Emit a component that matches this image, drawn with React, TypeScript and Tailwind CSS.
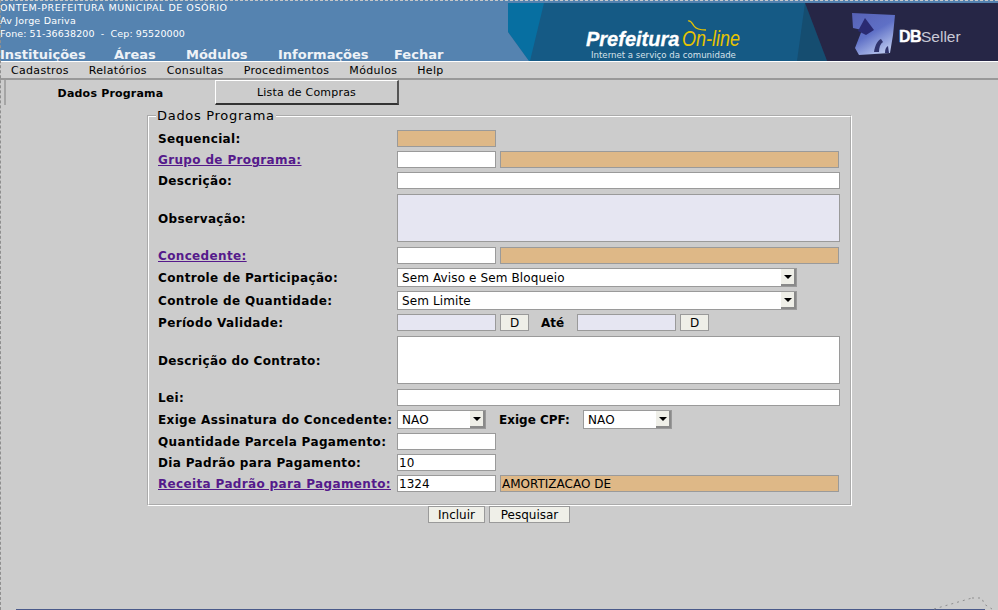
import React from 'react';

const font = "font-['DejaVu_Sans',sans-serif]";
const inputBase = "h-[17px] border border-[#9a9a9a] px-[1px] text-[12px] leading-[17px] text-black overflow-hidden whitespace-nowrap";
const tan = "bg-[#deb887]";
const lilac = "bg-[#e6e6f2]";

function Label({ children, link }: { children: React.ReactNode; link?: boolean }) {
    return (
        <div className={`h-[17px] w-[239px] shrink-0 text-[12px] font-bold leading-[19px] tracking-[0.35px] whitespace-nowrap ${link ? 'text-[#551a8b] underline' : 'text-black'}`}>
            {children}
        </div>
    );
}

function Box({ w, color = 'bg-white', children }: { w: string; color?: string; children?: React.ReactNode }) {
    return <div className={`${inputBase} ${w} ${color}`}>{children}</div>;
}

function Select({ w, value }: { w: string; value: string }) {
    return (
        <div className={`flex h-[19px] ${w} items-stretch border border-[#9a9a9a] bg-white`}>
            <div className="flex-1 pl-[4px] text-[12px] leading-[18px] tracking-[0.12px] text-black">{value}</div>
            <div className="flex w-[15px] items-center justify-center border-r-2 border-b-2 border-[#8a8a8a] bg-[#efefe8]">
                <div className="h-0 w-0 border-x-[4px] border-t-[4px] border-x-transparent border-t-black" />
            </div>
        </div>
    );
}

function Btn({ w, children }: { w: string; children: React.ReactNode }) {
    return (
        <div className={`h-[17px] ${w} border border-[#9a9a9a] bg-[#efefe8] text-center text-[12px] leading-[17px] text-black`}>
            {children}
        </div>
    );
}

function Row({ children, mb = 'mb-[4px]' }: { children: React.ReactNode; mb?: string }) {
    return <div className={`flex items-center ${mb}`}>{children}</div>;
}

function Banner() {
    return (
        <svg width="490" height="61" viewBox="0 0 490 61" className="shrink-0">
            <defs>
                <linearGradient id="dbLogo" x1="0" y1="0" x2="0.6" y2="1">
                    <stop offset="0" stopColor="#5661b4" />
                    <stop offset="0.55" stopColor="#5f70c6" />
                    <stop offset="1" stopColor="#b4c2ec" />
                </linearGradient>
            </defs>
            <rect width="490" height="61" fill="#155a85" />
            <rect width="490" height="3" fill="#5583b0" />
            <polygon points="0,3 36,3 22,61 21,61 0,32" fill="#076fa1" />
            <polygon points="0,32 21,61 0,61" fill="#5583b0" />
            <polygon points="297,3 289,61 319,61" fill="#154d70" />
            <polygon points="297,3 490,3 490,61 319,61" fill="#262646" />
            <text x="78" y="46" fontFamily="'Liberation Sans',sans-serif" fontWeight="700" fontStyle="italic" fontSize="20" fill="#fff" stroke="#fff" strokeWidth="0.3">Prefeitura</text>
            <text x="174" y="46" fontFamily="'Liberation Sans',sans-serif" fontStyle="italic" fontSize="22" fill="#e8c400" textLength="58" lengthAdjust="spacingAndGlyphs">On-line</text>
            <path d="M180 21c3-1 4 2 6 5 2 3 6 4 12 4" fill="none" stroke="#e8c400" strokeWidth="1.3" />
            <text x="83" y="58" fontFamily="'DejaVu Sans',sans-serif" fontSize="8.6" fill="#d5e2ea">Internet a serviço da comunidade</text>
            <polygon points="344,13 387,15 385,35 382,53 351,55 347,48 354,30 345,28" fill="url(#dbLogo)" />
            <polygon points="350,31 357,18 366,30 358,35" fill="#2a2a72" />
            <path d="M366 52c1-7 4-12 7-13l2 3c-3 2-4 6-4 10zM377 53c0-4 1-6 3-7l1 7z" fill="#30346c" />
            <text x="391" y="42" fontFamily="'Liberation Sans',sans-serif" fontWeight="700" fontSize="16" fill="#fff" letterSpacing="-0.6" stroke="#fff" strokeWidth="0.4">DB</text>
            <text x="413" y="42" fontFamily="'Liberation Sans',sans-serif" fontSize="15.5" fill="#c9c9d6">Seller</text>
        </svg>
    );
}

export default function App() {
    return (
        <div className={`relative flex h-[610px] w-[998px] flex-col overflow-hidden bg-[#cccccc] ${font}`}>
            {/* cabecalho */}
            <div className="flex h-[61px] shrink-0 justify-between overflow-hidden bg-[#5583b0]">
                <div className="flex flex-col text-white">
                    <div className="pt-[1px] text-[9.5px] leading-[13px] whitespace-nowrap">
                        <div className="tracking-[0.55px]">ONTEM-PREFEITURA MUNICIPAL DE OSÓRIO</div>
                        <div className="tracking-[0.2px]">Av Jorge Dariva</div>
                        <div className="tracking-[0.1px] whitespace-pre">Fone: 51-36638200  -  Cep: 95520000</div>
                    </div>
                    <div className="mt-[6px] flex text-[13px] font-bold leading-[18px] text-[#eef2f7]">
                        <span className="w-[114px]">Instituições</span>
                        <span className="w-[72px]">Áreas</span>
                        <span className="w-[92px]">Módulos</span>
                        <span className="w-[116px]">Informações</span>
                        <span>Fechar</span>
                    </div>
                </div>
                <Banner />
            </div>

            {/* menu */}
            <div className="flex h-[19px] shrink-0 gap-[20px] border-t border-b-2 border-t-white border-b-[#999999] bg-[#cfcfcf] pt-[1px] pl-[11px] text-[11px] leading-[16px] tracking-[0.32px] text-black">
                <span>Cadastros</span>
                <span>Relatórios</span>
                <span>Consultas</span>
                <span>Procedimentos</span>
                <span>Módulos</span>
                <span>Help</span>
            </div>

            {/* abas */}
            <div className="flex h-[25px] shrink-0 pl-[4px]">
                <div className="w-[211px] border-l-2 border-l-[#a5a5a5] pt-[6px] text-center text-[11px] font-bold leading-[16px] tracking-[0.2px] text-black">
                    Dados Programa
                </div>
                <div className="h-[25px] w-[184px] border border-t-white border-l-white border-r-2 border-b-2 border-r-[#555555] border-b-[#333333] text-center text-[11px] leading-[24px] tracking-[0.2px] text-black">
                    Lista de Compras
                </div>
            </div>

            {/* formulario */}
            <div className="mt-[3px] ml-[147px] flex w-[705px] flex-col">
                <fieldset className="h-[398px] border-2 border-white pl-[9px] [border-style:groove]">
                    <legend className="ml-[-2px] px-[1px] text-[13px] leading-[15px] tracking-[0.7px] text-black">Dados Programa</legend>
                    <div className="mt-[7px]">
                        <Row><Label>Sequencial:</Label><Box w="w-[99px]" color={tan} /></Row>
                        <Row>
                            <Label link>Grupo de Programa:</Label>
                            <Box w="w-[99px]" />
                            <div className="w-[4px]" />
                            <Box w="w-[339px]" color={tan} />
                        </Row>
                        <Row mb="mb-[5px]"><Label>Descrição:</Label><Box w="w-[443px]" /></Row>
                        <Row mb="mb-[5px]">
                            <Label>Observação:</Label>
                            <div className={`h-[48px] w-[443px] border border-[#9a9a9a] ${lilac}`} />
                        </Row>
                        <Row>
                            <Label link>Concedente:</Label>
                            <Box w="w-[99px]" />
                            <div className="w-[4px]" />
                            <Box w="w-[339px]" color={tan} />
                        </Row>
                        <Row><Label>Controle de Participação:</Label><Select w="w-[400px]" value="Sem Aviso e Sem Bloqueio" /></Row>
                        <Row><Label>Controle de Quantidade:</Label><Select w="w-[400px]" value="Sem Limite" /></Row>
                        <Row mb="mb-[5px]">
                            <Label>Período Validade:</Label>
                            <Box w="w-[99px]" color={lilac} />
                            <div className="w-[4px]" />
                            <Btn w="w-[29px]">D</Btn>
                            <span className="h-[17px] w-[48px] pl-[12px] text-[12px] leading-[19px] font-bold text-black">Até</span>
                            <Box w="w-[99px]" color={lilac} />
                            <div className="w-[4px]" />
                            <Btn w="w-[29px]">D</Btn>
                        </Row>
                        <Row mb="mb-[5px]">
                            <Label>Descrição do Contrato:</Label>
                            <div className="h-[48px] w-[443px] border border-[#9a9a9a] bg-white" />
                        </Row>
                        <Row><Label>Lei:</Label><Box w="w-[443px]" /></Row>
                        <Row>
                            <Label>Exige Assinatura do Concedente:</Label>
                            <Select w="w-[89px]" value="NAO" />
                            <span className="h-[17px] w-[97px] pl-[13px] text-[12px] leading-[19px] font-bold text-black">Exige CPF:</span>
                            <Select w="w-[89px]" value="NAO" />
                        </Row>
                        <Row><Label>Quantidade Parcela Pagamento:</Label><Box w="w-[99px]" /></Row>
                        <Row><Label>Dia Padrão para Pagamento:</Label><Box w="w-[99px]">10</Box></Row>
                        <Row>
                            <Label link>Receita Padrão para Pagamento:</Label>
                            <Box w="w-[99px]">1324</Box>
                            <div className="w-[4px]" />
                            <Box w="w-[339px]" color={tan}>AMORTIZACAO DE</Box>
                        </Row>
                    </div>
                </fieldset>
                <div className="flex justify-center gap-[4px] pr-[1px]">
                    <Btn w="w-[57px]">Incluir</Btn>
                    <Btn w="w-[81px]">Pesquisar</Btn>
                </div>
            </div>

            {/* borda pontilhada da captura */}
            <div className="pointer-events-none absolute inset-0 border-t border-l border-dashed border-t-[#c8c8c8] border-l-[#8f8f8f]" />
            <div className="pointer-events-none absolute bottom-0 left-[16px] h-px w-[969px] bg-[#4a5a8a]" />
            <svg className="pointer-events-none absolute right-0 bottom-0" width="70" height="16" viewBox="0 0 70 16">
                <path d="M6 15L44 4M44 4h10l2 6 8 5" fill="none" stroke="#8f8f8f" strokeDasharray="2 4" />
            </svg>
        </div>
    );
}
